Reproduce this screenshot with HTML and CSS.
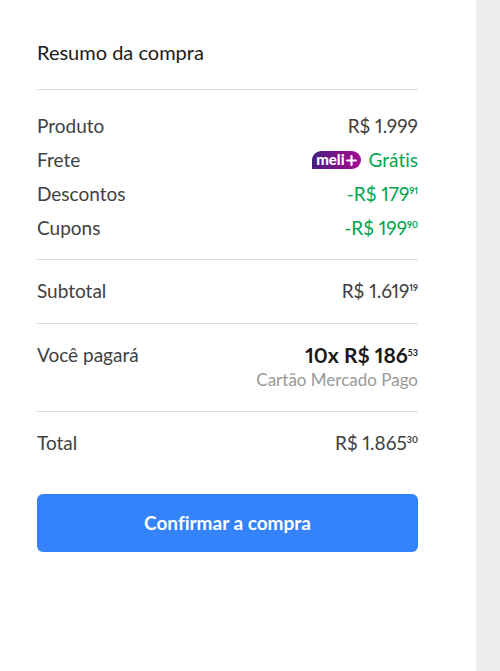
FILE: index.html
```html
<!DOCTYPE html>
<html lang="pt-BR">
<head>
<meta charset="utf-8">
<meta name="viewport" content="width=device-width, initial-scale=1">
<title>Resumo da compra</title>
<link rel="stylesheet" href="styles.css">
</head>
<body>
<main class="summary">
  <h1 class="title">Resumo da compra</h1>
  <dl class="group items">
    <div class="row"><dt>Produto</dt><dd>R$ 1.999</dd></div>
    <div class="row"><dt>Frete</dt><dd class="free"><span class="badge">meli<svg class="plus" viewBox="0 0 10 10" aria-hidden="true"><path d="M5 1v8M1 5h8"/></svg></span>Grátis</dd></div>
    <div class="row"><dt>Descontos</dt><dd class="green">-R$ 179<sup>91</sup></dd></div>
    <div class="row"><dt>Cupons</dt><dd class="green">-R$ 199<sup>90</sup></dd></div>
  </dl>
  <dl class="group">
    <div class="row"><dt>Subtotal</dt><dd>R$ 1.619<sup>19</sup></dd></div>
  </dl>
  <dl class="group">
    <div class="row"><dt>Você pagará</dt><dd><strong class="installments">10x R$ 186<sup>53</sup></strong><span class="note">Cartão Mercado Pago</span></dd></div>
  </dl>
  <dl class="group">
    <div class="row"><dt>Total</dt><dd>R$ 1.865<sup>30</sup></dd></div>
  </dl>
  <button class="confirm" type="button">Confirmar a compra</button>
</main>
</body>
</html>
```
FILE: styles.css
```css
* { box-sizing: border-box; }

body {
  margin: 0;
  background: #ededed;
  color: #404040;
  font-family: Lato, "Liberation Sans", sans-serif;
  font-size: 19px;
  font-variant-ligatures: none;
  font-variant-numeric: proportional-nums;
  line-height: 24px;
}

.summary {
  min-height: 100vh;
  margin-right: 24px;
  padding: 40px 58px 40px 37px;
  background: #fff;
}

.title {
  margin: 0 0 25px;
  color: #1a1a1a;
  font-size: 20px;
  font-weight: 400;
}

.group {
  margin: 0;
  padding: 19px 0 20px;
  border-top: 1px solid #ddd;
}

.items {
  display: grid;
  gap: 10px;
  padding: 24px 0 19px;
}

.row {
  display: flex;
  justify-content: space-between;
}

dd {
  margin: 0;
  text-align: right;
}

sup {
  font-size: 9px;
  font-weight: 700;
  line-height: 0;
  vertical-align: 7px;
}

.green, .free { color: #00a650; }

.free {
  display: flex;
  align-items: center;
  gap: 8px;
}

.badge {
  display: flex;
  align-items: center;
  gap: 1px;
  height: 18px;
  padding: 0 4px 2px;
  border-radius: 9px 9px 9px 0;
  background: linear-gradient(90deg, #46207f, #a80a93);
  color: #fff;
  font-size: 15px;
  font-weight: 900;
  line-height: 16px;
}

.plus {
  width: 11px;
  height: 11px;
  margin-top: 2px;
  fill: none;
  stroke: #fff;
  stroke-width: 2;
  stroke-linecap: round;
}

.installments {
  display: block;
  color: #1a1a1a;
  font-size: 21px;
  font-weight: 700;
}

.note {
  display: block;
  padding-top: 1px;
  margin-bottom: -1px;
  color: #999;
  font-size: 17px;
}

.confirm {
  display: block;
  width: 100%;
  height: 58px;
  margin-top: 19px;
  padding: 0 0 2px;
  border: 0;
  border-radius: 6px;
  background: #3483fa;
  color: #fff;
  font-family: inherit;
  font-size: 19px;
  font-weight: 700;
  font-variant-ligatures: none;
}
```
